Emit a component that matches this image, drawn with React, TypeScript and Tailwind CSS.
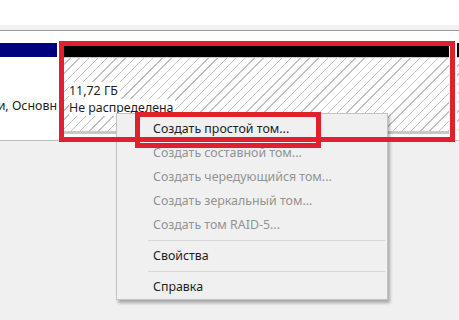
const hatch =
  'bg-[repeating-linear-gradient(135deg,#ffffff_0px,#ffffff_5.5px,#c2c2c2_5.5px,#c2c2c2_6.5px)]'

type Item = { label: string; disabled?: boolean } | 'sep'

const menuItems: Item[] = [
  { label: 'Создать простой том...' },
  { label: 'Создать составной том...', disabled: true },
  { label: 'Создать чередующийся том...', disabled: true },
  { label: 'Создать зеркальный том...', disabled: true },
  { label: 'Создать том RAID-5...', disabled: true },
  'sep',
  { label: 'Свойства' },
  'sep',
  { label: 'Справка' },
]

export default function App() {
  return (
    <div
      className="relative w-[459px] h-[320px] overflow-hidden bg-[#f0f0f0] text-[12.4px] text-[#1e1e1e]"
      style={{ fontFamily: '"Noto Sans", "Open Sans", sans-serif' }}
    >
      {/* top area */}
      <div className="h-[25px] bg-white" />
      <div className="h-[5px] bg-[#f2f2f2]" />
      <div className="h-[1px] bg-[#9a9a9a]" />

      {/* disk row */}
      <div className="h-[110px] bg-white flex flex-col border-b border-[#bcbcbc]">
        <div className="h-[12px]" />
        <div className="flex flex-1 gap-[2px]">
          {/* disk label column */}
          <div className="w-[57px] flex flex-col">
            <div className="h-[14px] bg-[#00007f]" />
            <div className="flex-1 overflow-hidden whitespace-nowrap flex justify-end">
              <span className="mt-[41px] leading-[16px]">и, Основн</span>
            </div>
          </div>
          {/* unallocated partition */}
          <div className="w-[390px] flex flex-col">
            <div className="h-[14px] bg-black" />
            <div className="h-[1px] bg-[#c8c8c8]" />
            <div className={`flex-1 mb-[6px] border-l-[3px] border-b-[3px] border-[#c8c8c8] ${hatch} pl-[7px] pt-[24px] flex flex-col items-start`}>
              <span className="bg-white leading-[17px] pr-[2px]">11,72 ГБ</span>
              <span className="bg-white leading-[17px] pr-[2px]">Не распределена</span>
            </div>
          </div>
          <div className="flex-1 flex flex-col ml-[6px]">
            <div className="h-[14px] bg-black" />
            <div className="h-[1px] bg-[#c8c8c8]" />
            <div className={`flex-1 mb-[6px] ${hatch}`} />
          </div>
        </div>
      </div>

      {/* context menu */}
      <div className="absolute left-[116px] top-[113px] w-[272px] h-[187px] bg-[#f0f0f0] border border-[#c4c4c4] shadow-[2px_3px_3px_rgba(0,0,0,0.3)] pt-[3px] flex flex-col">
        {menuItems.map((item, i) =>
          item === 'sep' ? (
            <div key={i} className="h-[7px] flex items-center pl-[31px] pr-[2px]">
              <div className="h-[1px] w-full bg-[#d7d7d7]" />
            </div>
          ) : (
            <div
              key={i}
              className={`h-[24px] flex items-center pl-[36px] whitespace-nowrap ${
                item.disabled ? 'text-[#939393]' : 'text-[#1e1e1e]'
              }`}
            >
              {item.label}
            </div>
          )
        )}
      </div>

      {/* red annotation frames */}
      <div className="absolute left-[59px] top-[41px] w-[396px] h-[101px] border-[5px] border-[#e0202c]" />
      <div className="absolute left-[135px] top-[112px] w-[186px] h-[36px] border-[5px] border-[#e0202c]" />
    </div>
  )
}
